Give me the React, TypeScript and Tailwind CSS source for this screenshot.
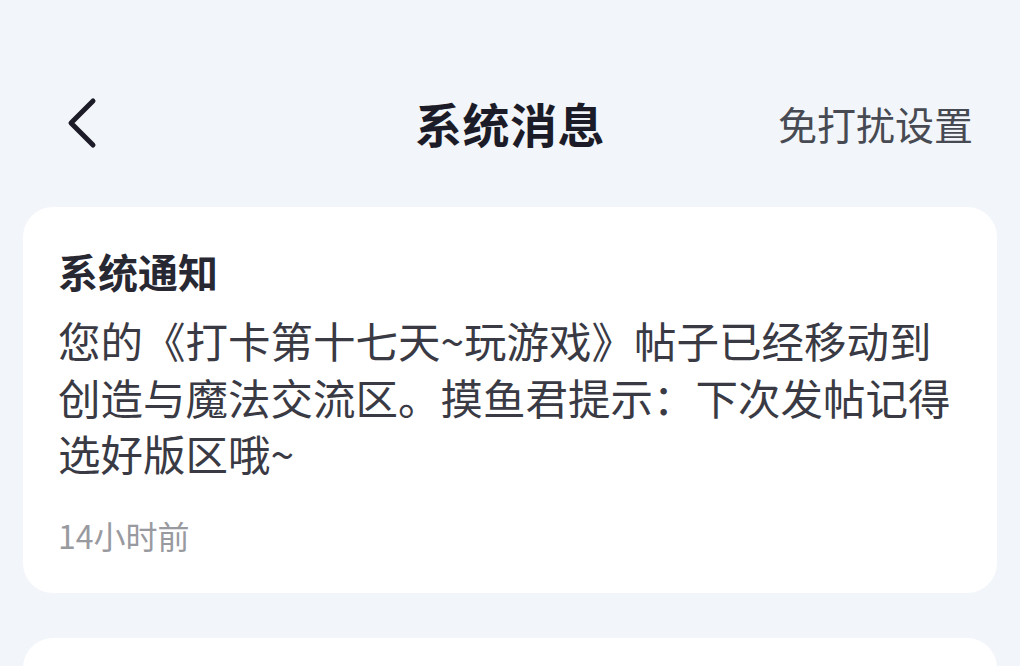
const font = { fontFamily: '"Noto Sans CJK SC", "Noto Sans", sans-serif' };

interface Notice {
  id: number;
  title: string;
  lines: string[];
  time: string;
}

const notices: Notice[] = [
  {
    id: 1,
    title: "系统通知",
    lines: [
      "您的《打卡第十七天~玩游戏》帖子已经移动到",
      "创造与魔法交流区。摸鱼君提示：下次发帖记得",
      "选好版区哦~",
    ],
    time: "14小时前",
  },
];

function BackIcon() {
  return (
    <svg width="32" height="52" viewBox="0 0 32 52" fill="none">
      <path d="M27 4 L5 26 L27 48" stroke="currentColor" strokeWidth="5" strokeLinecap="round" strokeLinejoin="round" />
    </svg>
  );
}

export default function App() {
  return (
    <div className="min-h-screen w-full bg-[#f2f5f9] overflow-hidden" style={font}>
      <div className="h-[666px] overflow-hidden">
        <header className="relative flex items-center justify-between h-[90px] mt-[78px] pl-[66px] pr-[47px]">
          <button className="text-[#1c1c28]">
            <BackIcon />
          </button>
          <h1 className="absolute left-1/2 -translate-x-1/2 text-[47px] font-bold text-[#1c1c28] tracking-[0.5px]">
            系统消息
          </h1>
          <span className="text-[39px] text-[#474a52]">免打扰设置</span>
        </header>

        <div className="flex flex-col gap-[45px] px-[23px] mt-[39px]">
          {notices.map((n) => (
            <div key={n.id} className="bg-white rounded-[30px] px-[35px] pt-[36px] pb-[38px]">
              <div className="text-[40px] leading-[56px] font-bold text-[#282833]">{n.title}</div>
              <div className="mt-[13px] text-[42.5px] leading-[56.5px] text-[#3a3a44] whitespace-nowrap">
                {n.lines.map((l, i) => (
                  <div key={i}>{l}</div>
                ))}
              </div>
              <div className="mt-[33px] text-[32px] leading-[40px] text-[#999aa0]">{n.time}</div>
            </div>
          ))}
          <div className="bg-white rounded-[30px] h-[140px] shrink-0" />
        </div>
      </div>
    </div>
  );
}
